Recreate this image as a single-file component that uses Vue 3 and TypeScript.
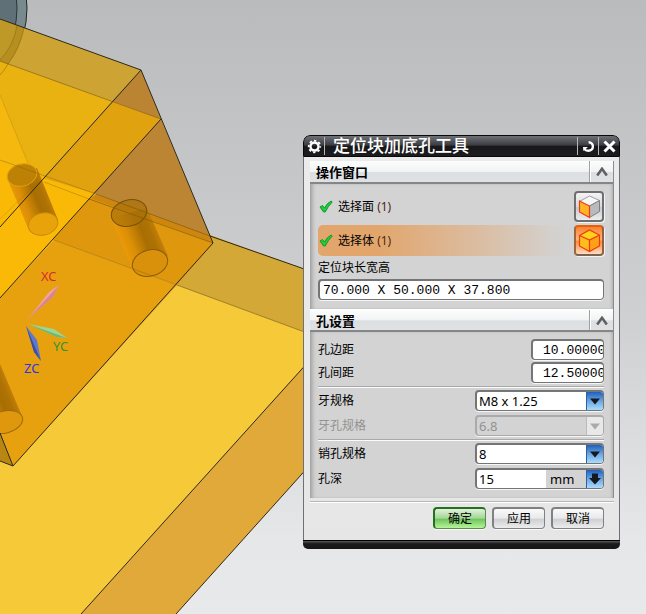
<script setup lang="ts">
import { reactive, ref } from 'vue'

const picks = [
  { id: 'face', label: '选择面', count: 1 },
  { id: 'body', label: '选择体', count: 1 },
]
const activePick = ref('body')
const windowOpen = ref(true)
const holeOpen = ref(true)

// Shading axis of each bored hole, across its width
const bores = [
  { id: 'bore-a', x1: 15, y1: 205, x2: 49, y2: 191 },
  { id: 'bore-b', x1: 121, y1: 244, x2: 158, y2: 229 },
  { id: 'bore-c', x1: -24, y1: 402, x2: 12, y2: 387 },
]

const form = reactive({
  size: '70.000 X 50.000 X 37.800',
  edge: '10.00000',
  gap: '12.50000',
  thread: 'M8 x 1.25',
  threadHole: '6.8',
  pin: '8',
  depth: '15',
})
</script>

<template>
  <main class="workspace">
    <svg class="scene" viewBox="0 0 646 614" preserveAspectRatio="xMinYMin slice" aria-hidden="true">
      <defs>
        <linearGradient v-for="b in bores" :id="b.id" :key="b.id" gradientUnits="userSpaceOnUse" :x1="b.x1" :y1="b.y1" :x2="b.x2" :y2="b.y2">
          <stop offset="0" stop-color="#ec9a08" />
          <stop offset="0.25" stop-color="#db8f06" />
          <stop offset="0.6" stop-color="#a86e03" />
          <stop offset="0.8" stop-color="#ae7204" />
          <stop offset="1" stop-color="#c98207" />
        </linearGradient>
      </defs>

      <ellipse cx="-25" cy="8" rx="52" ry="72" fill="#788a8d" stroke="#22282a" />
      <ellipse cx="-25" cy="8" rx="42" ry="64" fill="#5f7176" stroke="#2d3436" />

      <polygon points="205,233 310,271 310,334 177,285" fill="#d3a837" />
      <polygon points="177,285 310,334 310,360 81,614 0,614 0,450 13,466" fill="#f6c938" />
      <polygon points="310,360 310,465 176,614 81,614" fill="#e1a83a" />
      <polygon points="0,430 13,466 0,461" fill="#b98711" />

      <polygon points="0,19 141,70 112,101 0,61" fill="#cda333" />
      <path d="M0 19 L24 28 Q20 49 8 64 L0 61Z" fill="#b68f20" />
      <path d="M0 19 L17 26 Q13 48 0 60Z" fill="#bf9928" />
      <polygon points="0,61 112,101 0,227" fill="#eab210" />
      <polygon points="0,95 28,163 43,178 0,227" fill="#f4b80e" />
      <polygon points="141,70 161,119 112,101" fill="#bb8432" />
      <polygon points="112,101 161,119 0,298 0,227" fill="#e0a20f" />
      <polygon points="161,119 213,243 94,193" fill="#bb8533" />
      <polygon points="43,178 96,194 90,199 54,240 0,299 0,161" fill="#fab907" />
      <polygon points="96,194 210,236 213,243 89,199" fill="#cf860e" />
      <polygon points="90,198 213,243 177,285 53,240" fill="#df980e" />
      <polygon points="54,240 177,285 13,466 0,430 0,298" fill="#e7a10f" />

      <path d="M7 178 L28 228 L58 220 L37 168Z" fill="url(#bore-a)" />
      <ellipse cx="22" cy="175" rx="15" ry="11" transform="rotate(-14 22 175)" fill="#bc8105" stroke="#e0a108" />
      <ellipse cx="43" cy="224" rx="15" ry="11" transform="rotate(-14 43 224)" fill="#e9a30a" stroke="#c58a08" />
      <path d="M111 218 L132 268 L168 256 L147 208Z" fill="url(#bore-b)" />
      <ellipse cx="129" cy="213" rx="18" ry="13" transform="rotate(-15 129 213)" fill="#a97008" fill-opacity="0.7" stroke="#76500b" />
      <ellipse cx="150" cy="263" rx="18" ry="13" transform="rotate(-15 150 263)" fill="#d9910b" stroke="#8a5c0b" />
      <path d="M0 364 L22 416 L0 428Z" fill="url(#bore-c)" />
      <ellipse cx="5" cy="422" rx="18" ry="11" transform="rotate(-14 5 422)" fill="#df970d" stroke="#9b680a" />

      <g fill="none" stroke="#7b5a0a" stroke-opacity="0.65">
        <path d="M0 61 L161 119 M89 199 L213 243 M96 194 L210 236 M177 285 L310 334" />
        <path d="M54 240 L177 285 M0 160 L96 194 M44 182 L89 199" stroke-opacity="0.35" />
        <path d="M0 75 Q4 71 8 64 Q20 48 24 28 M0 60 Q13 47 17 26" stroke-opacity="0.45" />
        <path d="M0 219 L40 180 M0 95 L28 163" stroke-opacity="0.2" />
      </g>
      <g fill="none" stroke="#2c281c">
        <path d="M0 19 L141 70 L213 243 L13 466 L0 461 M0 433 L13 466" />
        <path d="M141 70 L0 227 M161 119 L0 298" />
        <path d="M210 236 L310 271 M310 360 L81 614 M310 465 L176 614" />
      </g>

      <path d="M28 319 L49 292 L59 285 L53 297Z" fill="#f1a3a0" />
      <path d="M28 319 L53 297 L59 285Z" fill="#d9868a" />
      <path d="M28 324 L54 329 L67 338 L56 337Z" fill="#9bd695" />
      <path d="M28 324 L56 337 L67 338Z" fill="#78b568" />
      <path d="M26 326 L37 340 L41 361 L34 352Z" fill="#5f78cd" />
      <path d="M26 326 L34 352 L41 361Z" fill="#3c4f9d" />
      <g class="axis">
        <text x="41" y="281" fill="#d92b35">XC</text>
        <text x="53" y="351" fill="#35942c">YC</text>
        <text x="24" y="373" fill="#2b35ef">ZC</text>
      </g>
    </svg>

    <section class="dialog" role="dialog" aria-labelledby="dialog-title">
      <header class="titlebar">
        <button class="tool first" type="button" aria-label="选项">
          <svg width="15" height="15" viewBox="0 0 15 15">
            <circle cx="7.5" cy="7.5" r="4" fill="none" stroke="#fff" stroke-width="2.4" />
            <circle cx="7.5" cy="7.5" r="5.8" fill="none" stroke="#fff" stroke-width="1.8" stroke-dasharray="2.4 2.15" stroke-dashoffset="1.2" />
          </svg>
        </button>
        <h1 id="dialog-title">定位块加底孔工具</h1>
        <button class="tool" type="button" aria-label="重置">
          <svg width="13" height="13" viewBox="0 0 13 13">
            <path d="M6.6 2.2 C12.2 2.4 12.6 10.8 6.2 10.8 C4.2 10.8 3 10 2.4 9" fill="none" stroke="#fff" stroke-width="2.4" />
            <path d="M1 7 H6 L1.4 11Z" fill="#fff" />
          </svg>
        </button>
        <button class="tool" type="button" aria-label="关闭">
          <svg width="13" height="13" viewBox="0 0 13 13">
            <path d="M1.5 1.5 L11.5 11.5 M11.5 1.5 L1.5 11.5" stroke="#fff" stroke-width="3" />
          </svg>
        </button>
      </header>

      <div class="content">
        <div class="panel">
          <div class="group-head">
            <h2>操作窗口</h2>
            <button type="button" aria-label="折叠操作窗口" @click="windowOpen = !windowOpen">
              <svg width="12" height="9" viewBox="0 0 12 9"><path d="M1.2 8.5 L6 1.8 L10.8 8.5" fill="none" stroke="#606060" stroke-width="2.6" /></svg>
            </button>
          </div>
          <div v-if="windowOpen" class="group-body">
            <div class="picks">
              <div v-for="p in picks" :key="p.id" class="pick" :class="{ active: p.id === activePick }">
                <svg class="check" width="14" height="13" viewBox="0 0 14 13">
                  <path d="M1 7 L3.5 5.5 L5.5 8 Q8 3 12.3 1 L13 2.3 Q9.2 6 6.2 12 H4.6Z" fill="#26c93c" stroke="#0e9a26" />
                </svg>
                <span class="pick-label">{{ p.label }} <span class="count">({{ p.count }})</span></span>
                <button type="button" class="cube" :aria-label="p.label" @click="activePick = p.id">
                  <svg v-if="p.id === 'face'" width="23" height="24" viewBox="0 0 23 24">
                    <path d="M1.5 6.5 L11.5 1 L21.5 5.5 L11.5 11Z" fill="#f7f7f8" stroke="#a0a0a4" />
                    <path d="M11.5 11 L21.5 5.5 V16.5 L11.5 22.5Z" fill="#b9babd" stroke="#808084" />
                    <path d="M1.5 6 L11.5 11 V22.5 L1.5 17Z" fill="#ffb428" stroke="#ee3a16" stroke-width="1.2" />
                  </svg>
                  <svg v-else width="23" height="24" viewBox="0 0 23 24">
                    <path d="M1.5 6.5 L11.5 1 L21.5 6 L11.5 11Z" fill="#ffd31a" />
                    <path d="M1.5 6.5 L11.5 11 V22.5 L1.5 17Z" fill="#ffbe1e" />
                    <path d="M11.5 11 L21.5 6 V17 L11.5 22.5Z" fill="#ffa114" />
                    <path d="M1.5 6.5 L11.5 1 L21.5 6 V17 L11.5 22.5 L1.5 17Z L11.5 11 L21.5 6 M11.5 11 V22.5" fill="none" stroke="#ec3a12" stroke-width="1.2" />
                  </svg>
                </button>
              </div>
            </div>
            <label class="size-label" for="size">定位块长宽高</label>
            <input id="size" v-model="form.size" class="field mono" type="text" />
          </div>

          <div class="group-head">
            <h2>孔设置</h2>
            <button type="button" aria-label="折叠孔设置" @click="holeOpen = !holeOpen">
              <svg width="12" height="9" viewBox="0 0 12 9"><path d="M1.2 8.5 L6 1.8 L10.8 8.5" fill="none" stroke="#606060" stroke-width="2.6" /></svg>
            </button>
          </div>
          <div v-if="holeOpen" class="group-body">
            <div class="rows tight">
              <div class="row">
                <label for="edge">孔边距</label>
                <input id="edge" v-model="form.edge" class="field mono short" type="text" />
              </div>
              <div class="row">
                <label for="gap">孔间距</label>
                <input id="gap" v-model="form.gap" class="field mono short" type="text" />
              </div>
            </div>
            <div class="rows ruled">
              <div class="row">
                <label for="thread">牙规格</label>
                <div class="combo">
                  <select id="thread" v-model="form.thread"><option>M8 x 1.25</option><option>M10 x 1.5</option></select>
                  <span class="arrow"><svg width="10" height="7" viewBox="0 0 10 7"><path d="M0 0.5 H10 L5 6.5Z" fill="#14191f" /></svg></span>
                </div>
              </div>
              <div class="row off">
                <label for="thread-hole">牙孔规格</label>
                <div class="combo">
                  <select id="thread-hole" v-model="form.threadHole" disabled><option>6.8</option></select>
                  <span class="arrow"><svg width="10" height="7" viewBox="0 0 10 7"><path d="M0 0.5 H10 L5 6.5Z" fill="#aaa" /></svg></span>
                </div>
              </div>
            </div>
            <div class="rows ruled">
              <div class="row">
                <label for="pin">销孔规格</label>
                <div class="combo">
                  <select id="pin" v-model="form.pin"><option>8</option><option>10</option></select>
                  <span class="arrow"><svg width="10" height="7" viewBox="0 0 10 7"><path d="M0 0.5 H10 L5 6.5Z" fill="#14191f" /></svg></span>
                </div>
              </div>
              <div class="row">
                <label for="depth">孔深</label>
                <div class="combo measure">
                  <input id="depth" v-model="form.depth" type="text" />
                  <span class="unit">mm</span>
                  <button class="arrow" type="button" aria-label="孔深选项"><svg width="12" height="12" viewBox="0 0 12 12"><path d="M3 0.5 H9 V5 H12 L6 11.5 L0 5 H3Z" fill="#14191f" /></svg></button>
                </div>
              </div>
            </div>
          </div>
        </div>

        <footer class="actions">
          <button type="button" class="push primary">确定</button>
          <button type="button" class="push">应用</button>
          <button type="button" class="push">取消</button>
        </footer>
      </div>
      <div class="base"></div>
    </section>
  </main>
</template>

<style>
body {
  margin: 0;
}
</style>

<style scoped>
.workspace {
  position: relative;
  min-height: 100vh;
  overflow: hidden;
  background: linear-gradient(#babbbc, #cfd0d2 52%, #e6e7e9 88%, #e8e9eb);
  font-family: "Noto Sans", "Noto Sans CJK SC", sans-serif;
  font-size: 12px;
  color: #000;
}
.workspace * {
  box-sizing: border-box;
}
button, input, select {
  margin: 0;
  padding: 0;
  border: 0;
  font: inherit;
  color: inherit;
  background: none;
}
svg {
  display: block;
}
.scene {
  position: absolute;
  inset: 0;
  width: 100%;
  height: 100%;
}
.axis {
  font-size: 13px;
}
.dialog {
  position: absolute;
  top: 135px;
  right: 26px;
  width: 317px;
  border-radius: 7px 7px 5px 5px;
  overflow: hidden;
}
.titlebar {
  display: flex;
  height: 22px;
  padding: 1px 0;
  border: 1px solid #080808;
  border-radius: 7px 7px 0 0;
  background: linear-gradient(#707176, #3c3d42 45%, #18181a 52%, #1c1c1e);
}
.titlebar h1 {
  flex: 1;
  margin: 0;
  padding-left: 8px;
  font-size: 17px;
  line-height: 18px;
  font-weight: 500;
  color: #fff;
}
.tool {
  display: grid;
  place-items: center;
  width: 21px;
  border-left: 1px solid #b5b5b8;
}
.tool.first {
  border-left: 0;
  border-right: 1px solid #b5b5b8;
}
.content {
  padding: 4px 5px 11px 6px;
  border: 1px solid #6f7072;
  border-width: 0 1px;
  background: linear-gradient(#ebebec, #e6e6e7);
}
.panel {
  border-right: 1px solid #8d8d8d;
}
.group-head {
  display: flex;
  height: 23px;
  border-bottom: 2px solid #858687;
  background: linear-gradient(#fcfdfd, #f1f3f4 50%, #dcdfe1 54%, #dfe1e3);
}
.group-head h2 {
  flex: 1;
  margin: 0;
  padding-left: 6px;
  font-size: 13px;
  line-height: 23px;
  font-weight: 700;
}
.group-head button {
  display: grid;
  place-items: center;
  width: 24px;
  border-left: 1px solid #9fa0a1;
  box-shadow: inset 1px 0 #fff;
}
.group-body {
  padding: 7px 9px 9px 8px;
  background: #d3d3d3;
  box-shadow: inset 4px 0 4px -2px #999, inset -3px 0 3px -2px #aaa;
}
.group-body + .group-head {
  border-top: 1px solid #fff;
}
.picks {
  display: grid;
  gap: 3px;
}
.pick {
  display: flex;
  align-items: center;
  gap: 5px;
  height: 31px;
  padding-left: 1px;
  border-radius: 5px;
}
.pick.active {
  background: linear-gradient(90deg, #e2a56b 20%, #dbbca0 55%, #d3d3d3 86%);
}
.pick-label {
  flex: 1;
  line-height: 20px;
}
.count {
  color: #4b2a10;
}
.cube {
  display: grid;
  place-items: center;
  width: 30px;
  height: 31px;
  border: 2px solid #6e6f71;
  border-radius: 4px;
  background: linear-gradient(#f3f3f4, #dadadc 50%, #c9cacc 54%, #ededee);
  box-shadow: 1px 1px #f4f4f4;
}
.active .cube {
  border-color: #e4600c #93613f #7c6253 #a2663c;
  background: linear-gradient(#fb812e, #ffb882 45%, #ff8e3f 54%, #ffdcc0);
}
.size-label {
  display: block;
  line-height: 23px;
}
.field {
  display: block;
  width: 100%;
  height: 21px;
  padding: 0 3px;
  border: 2px solid #747576;
  border-right-width: 1px;
  border-bottom-width: 1px;
  border-radius: 4px;
  background: #fff;
  box-shadow: 0 1px #f6f6f6;
}
.mono {
  font-family: "Liberation Mono", monospace;
  font-size: 13px;
}
.field.short {
  width: 73px;
  padding: 0 0 0 10px;
}
.rows {
  display: grid;
  gap: 4px;
}
.rows.tight {
  gap: 2px;
}
.rows.ruled {
  margin-top: 3px;
  padding-top: 3px;
  border-top: 1px solid #a9a9a9;
  box-shadow: inset 0 1px #fafafa;
}
.row {
  display: flex;
  align-items: center;
  justify-content: space-between;
  height: 21px;
}
.row label {
  line-height: 20px;
}
.off {
  color: #929292;
}
.combo {
  display: grid;
  grid-template-columns: 1fr 17px;
  width: 129px;
  height: 21px;
  border: 2px solid #747576;
  border-right-width: 1px;
  border-bottom-width: 1px;
  border-radius: 4px;
  background: #fff;
  box-shadow: 0 1px #f6f6f6;
  overflow: hidden;
}
.combo select {
  grid-area: 1 / 1 / 2 / 3;
  appearance: none;
  padding-left: 2px;
  font-size: 13px;
  line-height: 18px;
  opacity: 1;
}
.combo .arrow {
  grid-area: 1 / 2;
  display: grid;
  place-items: center;
  pointer-events: none;
  border-left: 1px solid #315f9b;
  background: linear-gradient(#1d5fbd, #6ca5e2 50%, #a9dcfb);
}
.off .combo {
  border-color: #aaa;
  background: #d3d3d3;
}
.off .combo .arrow {
  border-left-color: #bbb;
  background: #e8e8e8;
}
.combo.measure {
  grid-template-columns: 1fr 40px 17px;
}
.measure input {
  min-width: 0;
  padding-left: 2px;
  font-size: 13px;
}
.measure .unit {
  padding-left: 4px;
  line-height: 18px;
  font-size: 13px;
  background: #d3d3d3;
}
.combo.measure .arrow {
  grid-area: 1 / 3;
  pointer-events: auto;
}
.actions {
  display: flex;
  justify-content: flex-end;
  gap: 6px;
  margin-top: 3px;
  padding: 5px 10px 0 0;
  border-top: 1px solid #b5b5b5;
  box-shadow: inset 0 1px #fff;
}
.push {
  width: 53px;
  height: 22px;
  border: 2px solid #808183;
  border-right-width: 1px;
  border-bottom-width: 1px;
  border-radius: 4px;
  line-height: 19px;
  background: linear-gradient(#fafafa, #e9e9ea 48%, #cfd0d2 54%, #ececec);
  box-shadow: 0 1px #fafafa;
}
.push.primary {
  border-color: #24701f #5c8a52 #5c8a52 #24701f;
  background: linear-gradient(#e0f2da, #a4d797 48%, #6fc55c 54%, #b6f59a);
}
.base {
  height: 9px;
  border-top: 1px solid #000;
  background: linear-gradient(#5a5a5d, #1b1b1c 35%, #161617);
}
</style>
